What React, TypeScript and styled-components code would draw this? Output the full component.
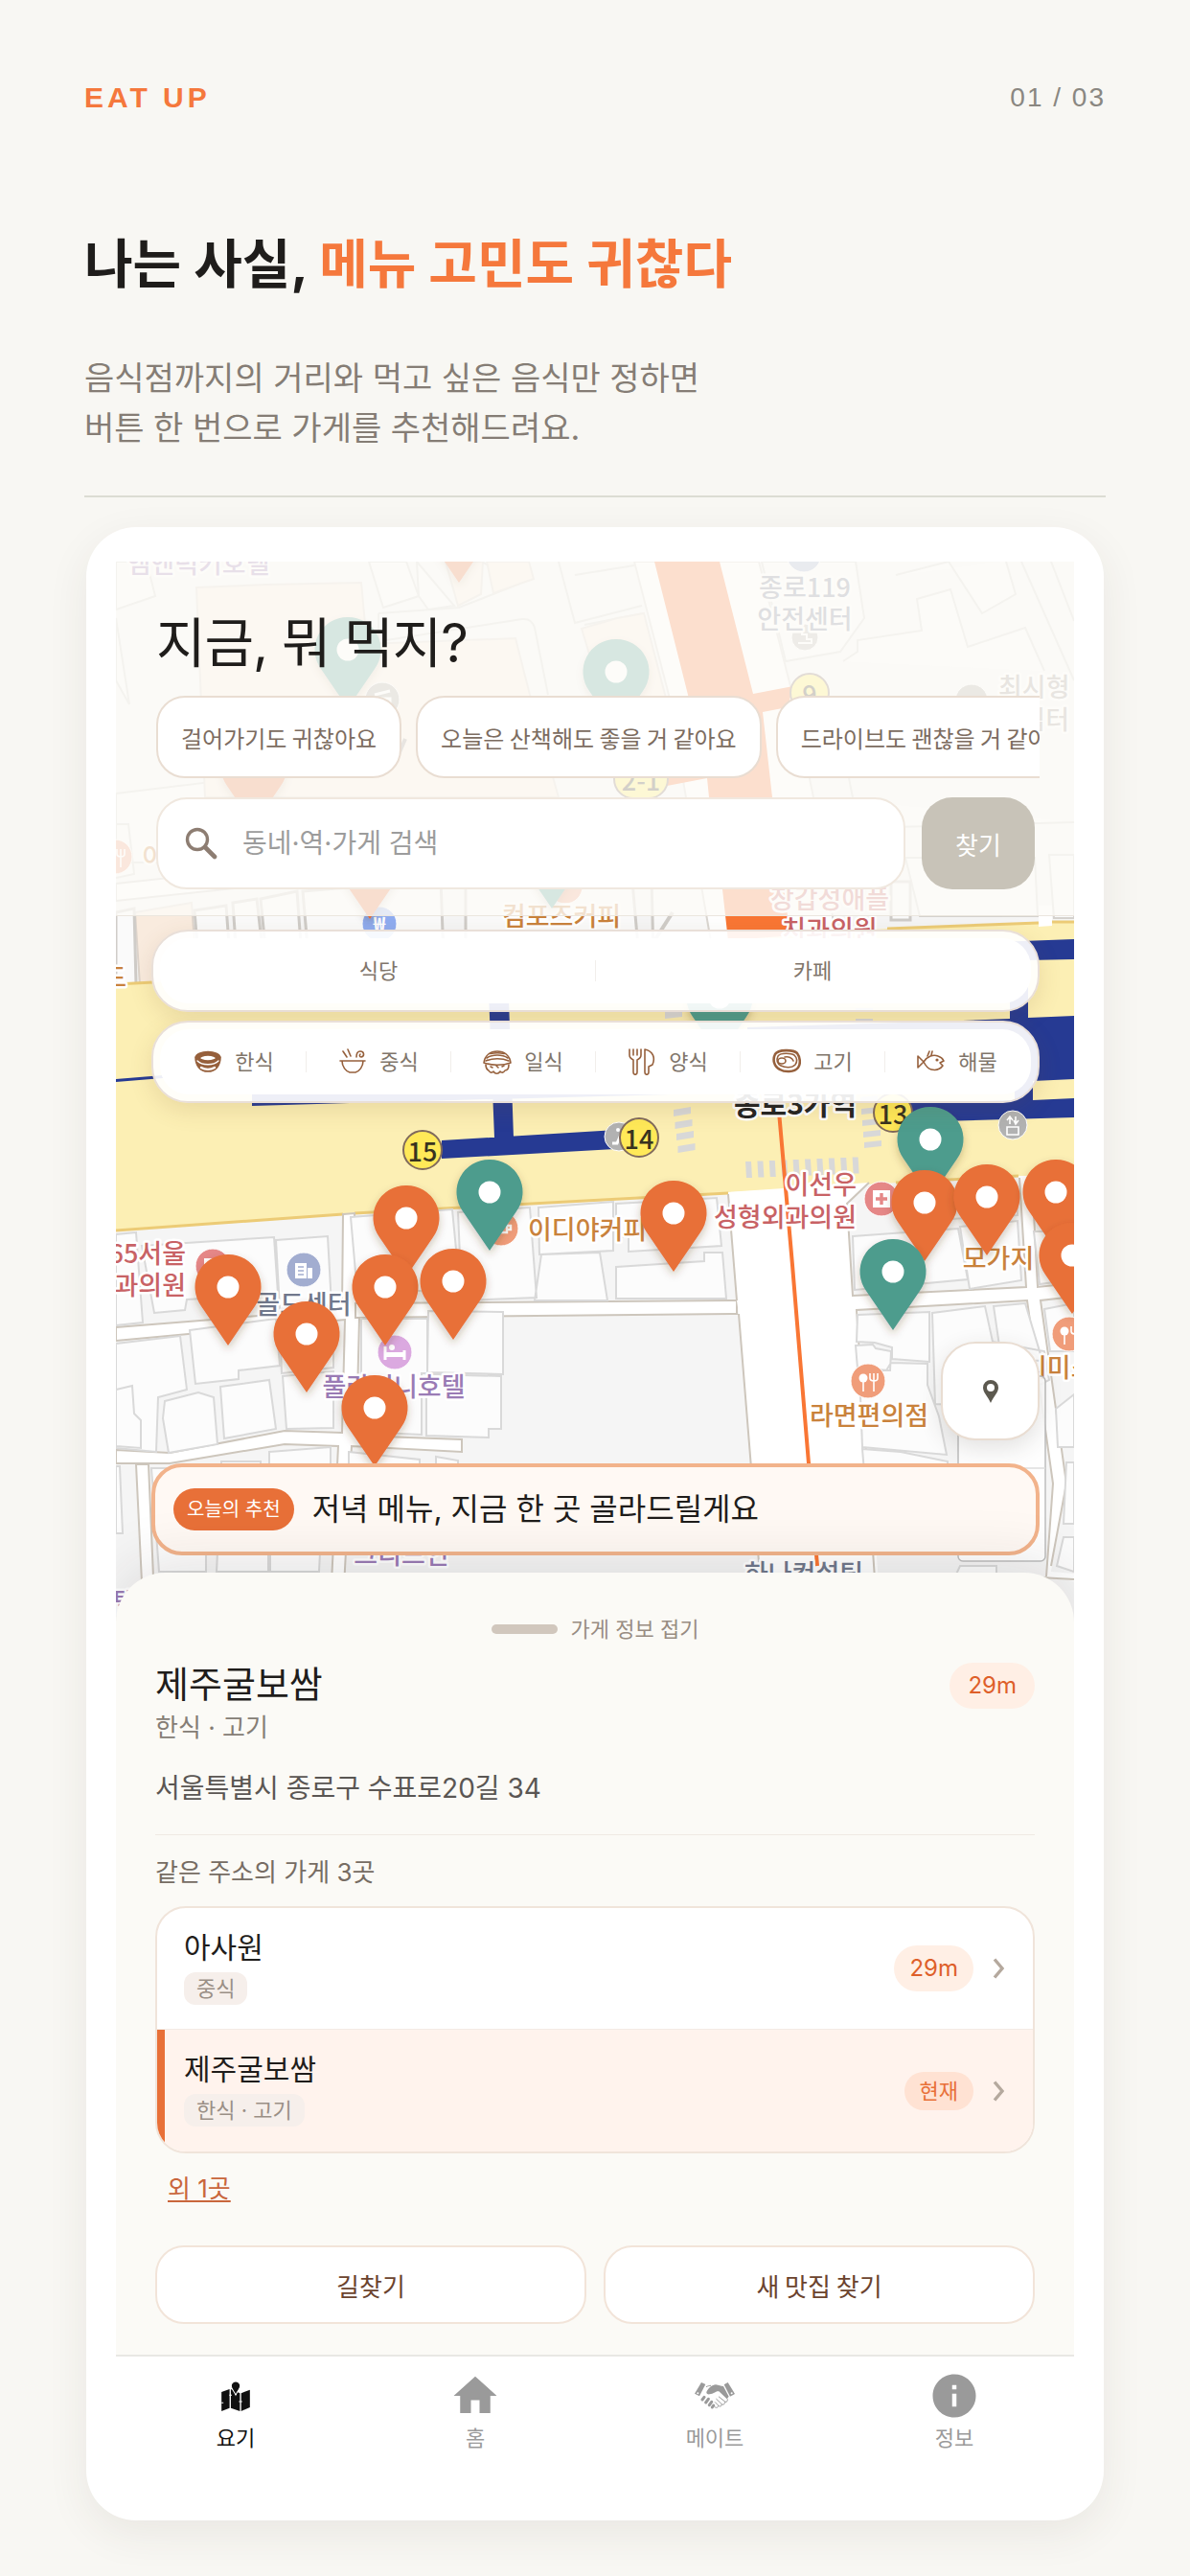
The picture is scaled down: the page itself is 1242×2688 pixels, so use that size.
import React from "react";
import styled, { createGlobalStyle, css } from "styled-components";
import { MdHome, MdInfo } from "react-icons/md";

const kr = `"Noto Sans CJK KR", sans-serif`;
const ui = `Inter, "Noto Sans CJK KR", sans-serif`;

const color = {
  paper: "#f8f7f3",
  ink: "#1f1d1b",
  orange: "#e87038",
  brand: "#f5783c",
  muted: "#857d75",
  line: "#e9ddd2",
};

const GlobalStyle = createGlobalStyle`
  * { box-sizing: border-box; }
  body { margin: 0; background: ${color.paper}; font-family: ${kr}; color: ${color.ink}; }
  button, input { font: inherit; color: inherit; margin: 0; }
  button { cursor: pointer; padding: 0; border: 0; background: none; }
  h1, h2, h3, p, ul { margin: 0; padding: 0; font-weight: 400; }
  ul { list-style: none; }
`;

/* ---------- Page ---------- */

const Page = styled.main`
  padding: 84px 88px 48px;
`;

const TopBar = styled.header`
  display: flex;
  align-items: center;
  justify-content: space-between;
  font-family: "Liberation Sans", Arial, sans-serif;
  line-height: 36px;
`;

const Brand = styled.span`
  font-size: 30px;
  font-weight: 700;
  letter-spacing: 4px;
  color: ${color.brand};
`;

const PageNumber = styled.span`
  font-size: 28px;
  letter-spacing: 2px;
  color: #8a8781;
`;

const Headline = styled.h1`
  margin-top: 119px;
  font-family: ${ui};
  font-size: 55px;
  line-height: 72px;
  font-weight: 700;

  em {
    font-style: normal;
    color: ${color.brand};
  }
`;

const Lead = styled.p`
  margin-top: 58px;
  padding-bottom: 44px;
  border-bottom: 2px solid #dcdcd3;
  font-family: ${ui};
  font-size: 34px;
  line-height: 52px;
  color: ${color.muted};
`;

const Card = styled.section`
  margin: 31px 2px 0;
  padding: 36px 31px;
  border-radius: 52px;
  background: #fff;
  box-shadow: 0 14px 44px rgba(60, 50, 40, 0.08);
`;

/* ---------- App screen ---------- */

const Screen = styled.div`
  position: relative;
  overflow: hidden;
  font-family: ${ui};
`;

const MapLayer = styled.svg`
  position: absolute;
  top: 0;
  left: 0;
  width: 100%;
  height: 1106px;
`;

const SearchPanel = styled.div`
  position: relative;
  padding: 53px 36px 27px 42px;
  border-bottom: 1px solid #ebe6de;
  background: rgba(253, 251, 248, 0.79);
`;

const ScreenTitle = styled.h2`
  font-size: 56px;
  line-height: 64px;
  letter-spacing: -1px;
`;

const ChipRow = styled.div`
  display: flex;
  gap: 15px;
  margin-top: 23px;
  overflow: hidden;
`;

const outlined = css`
  border: 2px solid ${color.line};
  background: #fff;
`;

const Chip = styled.button`
  ${outlined}
  flex: none;
  height: 86px;
  padding: 0 24px;
  border-radius: 30px;
  font-family: ${kr};
  font-size: 24px;
  color: #7c6c60;
`;

const SearchRow = styled.form`
  display: flex;
  gap: 17px;
  margin-top: 20px;
  padding-right: 5px;
`;

const SearchField = styled.label`
  ${outlined}
  flex: 1;
  display: flex;
  align-items: center;
  gap: 24px;
  height: 96px;
  padding: 0 28px;
  border-color: #f0e8df;
  border-radius: 32px;
`;

const SearchInput = styled.input`
  flex: 1;
  min-width: 0;
  border: 0;
  outline: 0;
  background: none;
  font-size: 28px;

  &::placeholder {
    color: #9c9c9c;
    opacity: 1;
  }
`;

const FindButton = styled.button`
  width: 118px;
  border-radius: 32px;
  background: #c8c3b8;
  font-family: ${kr};
  font-size: 26px;
  color: #fff;
`;

const FilterStack = styled.div`
  position: relative;
  display: grid;
  gap: 9px;
  margin: 14px 36px 0 37px;
`;

const FilterBar = styled.div`
  height: 86px;
  padding: 7px;
  border: 2px solid #e9dfd8;
  border-radius: 38px;
  background: rgba(255, 255, 255, 0.92);
  box-shadow: 0 8px 24px rgba(120, 84, 40, 0.14);
`;

const FilterTrack = styled.div`
  display: flex;
  align-items: center;
  height: 100%;
  padding: 0 2px;
  border-radius: 30px;
  background: #fff;
`;

const FilterButton = styled.button`
  flex: 1;
  display: flex;
  align-items: center;
  justify-content: center;
  gap: 13px;
  height: 22px;
  font-size: 22px;
  line-height: 22px;
  color: #80756a;

  & + & {
    border-left: 1px solid #f1eeeb;
  }
`;

const MapTools = styled.div`
  position: relative;
  display: flex;
  justify-content: flex-end;
  margin: 249px 36px 0;
`;

const LocateButton = styled.button`
  ${outlined}
  display: grid;
  place-items: center;
  width: 103px;
  height: 103px;
  border-radius: 36px;
  box-shadow: 0 8px 24px rgba(60, 50, 40, 0.14);
`;

const Recommend = styled.button`
  position: relative;
  display: flex;
  align-items: center;
  gap: 19px;
  width: calc(100% - 73px);
  height: 96px;
  margin: 24px 36px 0 37px;
  padding: 0 19px;
  border: 4px solid #f2b38b;
  border-radius: 32px;
  background: #fff9f4;
  text-align: left;
`;

const RecommendTag = styled.span`
  height: 44px;
  padding: 0 14px;
  border-radius: 22px;
  background: ${color.orange};
  font-size: 20px;
  line-height: 44px;
  color: #fff;
`;

const RecommendText = styled.span`
  font-size: 32px;
  line-height: 44px;
`;

/* ---------- Bottom sheet ---------- */

const Sheet = styled.section`
  position: relative;
  margin-top: 18px;
  padding: 44px 41px 32px;
  border-radius: 52px 52px 0 0;
  background: #fbfaf6;
  box-shadow: 0 -8px 64px rgba(40, 30, 30, 0.12);
`;

const Handle = styled.button`
  display: flex;
  align-items: center;
  justify-content: center;
  gap: 14px;
  width: 100%;
  font-size: 22px;
  line-height: 30px;
  color: #988c82;

  &::before {
    content: "";
    width: 69px;
    height: 10px;
    border-radius: 5px;
    background: #d1c7bd;
  }
`;

const PlaceHead = styled.div`
  display: flex;
  align-items: flex-start;
  justify-content: space-between;
  margin-top: 20px;
`;

const PlaceName = styled.h2`
  font-size: 38px;
  line-height: 44px;
`;

const Meta = styled.p<{ $top: number; $tone?: string; $size?: number }>`
  margin-top: ${(p) => p.$top}px;
  font-size: ${(p) => p.$size ?? 26}px;
  line-height: ${(p) => (p.$size ? 36 : 32)}px;
  color: ${(p) => p.$tone ?? color.muted};
`;

const Pill = styled.span<{ $current?: boolean; $wide?: boolean }>`
  padding: 0 ${(p) => (p.$wide ? 19 : 16)}px;
  border-radius: 24px;
  background: ${(p) => (p.$current ? "#ffe2d3" : "#ffefe5")};
  font-size: ${(p) => (p.$current ? 22 : 24)}px;
  line-height: ${(p) => (p.$current ? 40 : 48)}px;
  color: ${(p) => (p.$current ? color.orange : "#de5f2a")};
`;

const Divider = styled.hr`
  height: 1px;
  margin: 30px 0 0;
  border: 0;
  background: #efe9e3;
`;

const PlaceList = styled.ul`
  margin-top: 19px;
  overflow: hidden;
  border: 2px solid #f0e4da;
  border-radius: 32px;
  background: #fff;
`;

const PlaceRow = styled.button<{ $active?: boolean }>`
  display: flex;
  align-items: center;
  gap: 18px;
  width: 100%;
  height: 127px;
  padding: 0 28px;
  text-align: left;
  ${(p) =>
    p.$active
      ? css`
          background: #fff3ed;
          box-shadow: inset 8px 0 0 ${color.orange};
        `
      : css`
          border-bottom: 1px solid #f3ebe5;
        `}
`;

const RowText = styled.span`
  flex: 1;
  display: grid;
  justify-items: start;
  gap: 6px;
  padding-bottom: 5px;
`;

const RowName = styled.span`
  font-size: 30px;
  line-height: 40px;
`;

const Tag = styled.span`
  padding: 0 13px;
  border-radius: 12px;
  background: #f6efeb;
  font-size: 22px;
  line-height: 34px;
  color: #9a8f86;
`;

const MoreLink = styled.a`
  display: block;
  width: fit-content;
  margin: 21px 0 0 13px;
  font-size: 26px;
  line-height: 32px;
  color: #c9663c;
  text-decoration: underline;
  text-underline-offset: 3px;
`;

const Actions = styled.div`
  display: grid;
  grid-template-columns: 1fr 1fr;
  gap: 18px;
  margin-top: 43px;
`;

const ActionButton = styled.button`
  ${outlined}
  height: 82px;
  border-color: #f2e4d9;
  border-radius: 30px;
  font-family: ${kr};
  font-size: 26px;
  color: #6b432e;
`;

const TabBar = styled.nav`
  position: relative;
  display: grid;
  grid-template-columns: repeat(4, 1fr);
  border-top: 2px solid #e9e8e4;
  background: #fff;
`;

const Tab = styled.button<{ $active?: boolean }>`
  display: grid;
  grid-template-rows: 54px 28px;
  gap: 3px;
  place-items: center;
  padding: 14px 0 36px;
  font-size: 22px;
  line-height: 28px;
  color: ${(p) => (p.$active ? "#111" : "#9a9a9a")};
`;

/* ---------- Icons ---------- */

const SearchIcon = () => (
  <svg width="34" height="34" viewBox="0 0 34 34" fill="none" stroke="#8d7d72" strokeLinecap="round" aria-hidden>
    <circle cx="13" cy="13" r="10.5" strokeWidth="3.4" />
    <path d="M21 21l10 10" strokeWidth="4.6" />
  </svg>
);

const Chevron = () => (
  <svg width="16" height="24" viewBox="0 0 16 24" fill="none" stroke="#b5a99e" strokeWidth="3.4" aria-hidden>
    <path d="M4 2.500l8 9.500l-8 9.500" />
  </svg>
);

const LocateIcon = () => (
  <svg width="16" height="24" viewBox="0 0 16 24" aria-hidden>
    <path fillRule="evenodd" fill="#5c594f" d="M8 0a8 8 0 0 0-8 8c0 5 5 9 8 16c3-7 8-11 8-16a8 8 0 0 0-8-8zm0 4a4 4 0 1 1 0 8a4 4 0 0 1 0-8z" />
  </svg>
);

const MapIcon = () => (
  <svg width="30" height="31" viewBox="0 0 88 92" fill="currentColor" aria-hidden>
    <path d="M0 33L25 24V82L0 92zM29 24L57 36V92L29 82zM61 36L88 26V80L61 92z" />
    <path d="M44 0a14 14 0 0 1 14 14c0 9-9 15-14 28c-5-13-14-19-14-28a14 14 0 0 1 14-14z" stroke="#fff" strokeWidth="3" />
    <path d="M0 66h6M24 42h8M54 62h10" stroke="#fff" strokeWidth="3" />
  </svg>
);

const HandshakeIcon = () => (
  <svg width="42" height="28" viewBox="0 0 126 84" fill="currentColor" aria-hidden>
    <path d="M21 0L34 6L15 43L0 35z" />
    <path d="M104 0L92 7L111 44L126 36z" />
    <circle cx="10" cy="34" r="3" fill="#fff" />
    <circle cx="116" cy="34" r="3" fill="#fff" />
    <path d="M37 30C44 16 55 8 66 7C76 8 82 12 90 12L107 44L101 52L76 28C66 26 60 36 47 37C41 38 36 35 37 30z" />
    <path d="M36 14C42 11 46 10 51 10" fill="none" stroke="currentColor" strokeWidth="3" />
    <g stroke="currentColor" strokeWidth="9" strokeLinecap="round">
      <path d="M24 54l6-8M35 63l8-11M46 71l7-10M55 78l4-6" />
    </g>
    <g fill="none" stroke="currentColor" strokeWidth="3" strokeLinecap="round">
      <path d="M76 45l20 16c5 1 8-3 7-8M68 52l18 17c5 2 9-2 9-7M64 62l12 12c4 3 9 0 9-5M62 76c5 5 11 4 12-2" />
    </g>
  </svg>
);

const FoodSvg = styled.svg`
  width: 30px;
  height: 28px;
  fill: none;
  stroke: #96603c;
  stroke-width: 1.600;
  stroke-linecap: round;
  stroke-linejoin: round;
`;

const foods = [
  {
    label: "한식",
    art: (
      <>
        <path d="M2 9c0 9 5 15 13 15s13-6 13-15z" fill="#96603c" />
        <ellipse cx="15" cy="9" rx="12.500" ry="5.500" fill="#96603c" />
        <ellipse cx="15" cy="10" rx="8.500" ry="3" fill="#fff" />
        <path d="M4 13c5 5 17 5 22 0" stroke="#fff" strokeWidth="1.400" />
        <path d="M8 20c4 2.500 10 2.500 14 0" stroke="#fff" strokeWidth="2.400" />
      </>
    ),
  },
  {
    label: "중식",
    art: (
      <>
        <path d="M2 13h26M4 13c0 6 4 11 8 12h6c4-1 8-6 8-12M5 3l4 6M10 1l3 7" />
        <path d="M19 9c0-5 2-6 4-6c4 0 5 5 1 6c-2 0-2-2-1-3" />
      </>
    ),
  },
  {
    label: "일식",
    art: (
      <>
        <path d="M1 15C2 7 8 3 15 3s13 4 14 12c-8 3-20 3-28 0z" />
        <path d="M4 10c6-4 16-4 22 0M3 13c7-3 17-3 24 0M8 5.500c5-1 9-1 14 0" />
        <path d="M3 17c0 3 1 5 3 6c1 2 3 3 5 1c2 3 5 3 7 0c2 2 4 1 5-1c3 0 4-3 4-6M8 19l2 1M14 18l2 2M20 19l2-1" />
      </>
    ),
  },
  {
    label: "양식",
    art: (
      <>
        <path d="M2 1v6c0 3 2 4 4 5v13c0 3 4 3 4 0V12c2-1 4-2 4-5V1M6 1v6M10 1v6" />
        <path d="M18 1v24c0 3 4 3 4 0v-6l4-2c3-7 1-14-8-16z" />
      </>
    ),
  },
  {
    label: "고기",
    art: (
      <>
        <path d="M3 6C6 1 22 1 26 5c3 4 4 11 1 15c-4 5-14 5-19 2C2 19 0 12 3 6z" strokeWidth="2.600" />
        <path d="M6 8c3-4 14-3 17-1c3 3 3 7 1 10c-4 4-11 3-15 1c-4-2-5-6-3-10z" />
        <ellipse cx="10" cy="13" rx="4" ry="3" />
        <path d="M13 9c4-1 8 1 9 4" />
      </>
    ),
  },
  {
    label: "해물",
    art: (
      <>
        <path d="M1 8l6 6l-6 6zM7 14c4-6 10-8 15-6c3 1 5 3 6 5l-4 2l3 3c-3 4-8 5-12 4c-4-1-6-4-8-8z" />
        <path d="M11 8l2-5M15 7l1-4" />
        <circle cx="21" cy="12" r="0.800" />
      </>
    ),
  },
];

/* ---------- Map drawing ---------- */

type Point = [number, number];

const Pin = ({ at: [x, y], teal }: { at: Point; teal?: boolean }) => (
  <g transform={`translate(${x} ${y})`} filter="url(#pinShadow)">
    <path d="M0-34A34 34 0 0 1 28 20L0 61L-28 20A34 34 0 0 1 0-34z" fill={teal ? "#4e9c8d" : color.orange} />
    <circle r="11.500" fill="#fff" />
  </g>
);

const tealBack: Point[] = [[363, 678], [643, 701], [576, 887], [751, 1041], [971, 1189]];
const orangePins: Point[] = [
  [479, 547], [265, 800], [386, 898], [424, 1271], [238, 1343], [402, 1343], [473, 1337],
  [320, 1392], [391, 1469], [703, 1266], [965, 1255], [1030, 1249], [1102, 1244], [1119, 1310],
];
const tealFront: Point[] = [[511, 1244], [932, 1327]];

const tone = { red: "#c86265", brown: "#c9823c", purple: "#9a7bb5", slate: "#70788c", dark: "#232323", gray: "#9a938c" };

const Label = styled.text<{ $station?: boolean }>`
  font-family: ${kr};
  font-size: ${(p) => (p.$station ? 30 : 27)}px;
  font-weight: ${(p) => (p.$station ? 700 : 500)};
  paint-order: stroke;
  stroke: #fff;
  stroke-width: 5px;
  stroke-linejoin: round;
`;

const labels: { x: number; y: number; text: string; fill: string; anchor?: "start" | "end" | "middle" }[] = [
  { x: 207, y: 598, text: "앰앤럭키호텔", fill: tone.purple },
  { x: 840, y: 623, text: "종로119", fill: tone.slate },
  { x: 840, y: 656, text: "안전센터", fill: tone.slate },
  { x: 1042, y: 727, text: "최시형 생", fill: tone.gray, anchor: "start" },
  { x: 1116, y: 761, text: "집터", fill: tone.gray, anchor: "end" },
  { x: 148, y: 904, text: "이", fill: tone.brown, anchor: "start" },
  { x: 132, y: 1030, text: "드", fill: tone.brown, anchor: "end" },
  { x: 586, y: 966, text: "컴포즈커피", fill: tone.brown },
  { x: 866, y: 948, text: "장갑성애플", fill: tone.red },
  { x: 866, y: 980, text: "치과의원", fill: tone.red },
  { x: 194, y: 1318, text: "65서울", fill: tone.red, anchor: "end" },
  { x: 194, y: 1351, text: "과의원", fill: tone.red, anchor: "end" },
  { x: 317, y: 1371, text: "골드센터", fill: tone.slate },
  { x: 411, y: 1457, text: "풀라지니호텔", fill: tone.purple },
  { x: 551, y: 1293, text: "이디야커피", fill: tone.brown, anchor: "start" },
  { x: 894, y: 1246, text: "이선우", fill: tone.red, anchor: "end" },
  { x: 894, y: 1280, text: "성형외과의원", fill: tone.red, anchor: "end" },
  { x: 1042, y: 1323, text: "모가지", fill: tone.brown },
  { x: 907, y: 1487, text: "라면편의점", fill: tone.brown },
  { x: 1068, y: 1437, text: "시미소", fill: tone.brown, anchor: "start" },
  { x: 839, y: 1652, text: "하나컨설팅", fill: tone.slate },
  { x: 419, y: 1632, text: "그리드인", fill: tone.purple },
  { x: 118, y: 1682, text: "호텔", fill: tone.purple, anchor: "middle" },
];

const Poi = ({ at: [x, y], fill, r = 18, children }: { at: Point; fill: string; r?: number; children?: React.ReactNode }) => (
  <g transform={`translate(${x} ${y})`}>
    <circle r={r} fill={fill} stroke="#fff" strokeWidth="1" />
    {children}
  </g>
);

const Cutlery = () => (
  <g stroke="#fff" strokeWidth="1.600" fill="none">
    <circle cx="-5" cy="-3" r="4.500" fill="#fff" stroke="none" />
    <path d="M-5 0V11M6-8V11M2-8v5c0 4 8 4 8 0v-5" />
  </g>
);

const ExitMark = ({ at: [x, y], text, rx = 20 }: { at: Point; text: string; rx?: number }) => (
  <g>
    <rect x={x - rx} y={y - 20} width={rx * 2} height="40" rx="20" fill="#ffe958" stroke="#806a5c" strokeWidth="2" />
    <text x={x} y={y + 12} textAnchor="middle" fontFamily={kr} fontSize="27" fontWeight="500" fill="#38331f">{text}</text>
  </g>
);

const CityMap = () => (
  <MapLayer viewBox="121 586 1000 1106" preserveAspectRatio="xMidYMin slice" role="img" aria-label="종로3가역 주변 지도">
    <defs>
      <filter id="pinShadow" x="-30%" y="-20%" width="160%" height="150%">
        <feDropShadow dx="0" dy="4" stdDeviation="4" floodColor="#5a3c28" floodOpacity="0.28" />
      </filter>
    </defs>
    <rect x="121" y="586" width="1000" height="1106" fill="#f5f5f5" />

    {/* northern blocks */}
    <g fill="#fafafa" stroke="#d5d2ce" strokeWidth="2">
      <path d="M121 636L162 622L153 586H121zM121 710L135 735L121 645zM400 634L437 622L424 586H385zM437 622L447 636L474 632L435 586z" />
      <path d="M395 640L479 634L540 610L503 586M395 705V640M403 668L545 646Q555 645 558 655L572 725" fill="none" />
      <path d="M121 828L228 815L232 900H121zM121 860H134L140 912L121 916M228 815L330 800" />
      <path d="M583 586L600 650L670 632M600 600L662 590M610 652L672 640" fill="none" />
      <path d="M795 586L820 690L877 680L902 645L893 586zM880 690L895 680V668L962 658L957 625L992 615L1010 675L1070 655L1090 700M935 600L990 586L1025 640L1060 620L1050 586M1066 586L1121 710M1097 586L1121 648" />
      <path d="M849 832L860 865L1121 858M890 832L886 812M945 895H1080L1083 956H960zM1095 892H1121V958H1100z" />
    </g>
    <g fill="#f9ebde" stroke="#ddd4cc" strokeWidth="2">
      <path d="M205 613L278 610L377 608L383 672L538 666L553 725L583 832H214z" />
      <path d="M465 586H504L502 620L478 632zM508 586H552L557 604L515 619z" />
      <path d="M607 656L644 645L672 640L698 740L690 770L640 765z" />
      <path d="M141 952L200 942L206 1027L146 1028z" />
    </g>
    <path d="M121 922L380 894L560 885L740 878V900L560 906L330 918L121 940z" fill="#fff" stroke="#cfccc8" strokeWidth="2" />
    <g fill="#fafafa" stroke="#cfccc8" strokeWidth="3">
      <path d="M121 952L140 948L142 1027H121zM203 950L236 945L240 1000H207zM243 942L268 938L275 1000H247zM272 938L310 930L315 1000H278zM316 930L460 918L463 1000H322zM486 920H660L667 1000H486zM680 915H752L756 1000H682zM930 920H950V960H930z" />
    </g>
    <path d="M662 586H792L826 720L849 832L876 1000H745L716 832L698 725z" fill="#fff" stroke="#dad6d1" strokeWidth="2" />
    <path d="M702 952L668 1005" stroke="#cfccc8" strokeWidth="4" />
    <path d="M683 586H751L786 724L828 716L822 738L796 743L806 832L822 956L838 1072H770L754 928L740 832L738 812L696 820L698 808L736 800L718 725z" fill="#f97634" />

    {/* main avenue */}
    <path d="M121 1027L160 1025L926 969L1121 961V1226L1063 1227L760 1244L358 1267L121 1284z" fill="#fcefb4" />
    <path d="M121 1027L160 1025M926 969L1084 963M1096 962H1121M121 1284L358 1267M370 1266L760 1245M935 1234L1063 1227" fill="none" stroke="#eccb76" strokeWidth="3" />
    <path d="M1084 945H1098V966L1084 967z" fill="#fff" />
    <g fill="#d8d8d8">
      {[1156, 1169, 1181, 1194].map((y, i) => (
        <path key={y} d={`M${703 + i * 1.5} ${y + 2}l18-3v7l-18 3z`} />
      ))}
      {[1143, 1155, 1167, 1179, 1190].map((y, i) => (
        <path key={y} d={`M${898 + i} ${y + 2}l18-2v6l-18 2z`} />
      ))}
      {Array.from({ length: 10 }, (_, i) => (
        <path key={i} d={`M${778 + i * 12.4} ${1212 - i * 0.5}h6l1 17h-6z`} />
      ))}
      <path d="M694 1056l18-2v7l-18 2zM893 1063h18v6h-18zM893 1052h18v4h-18z" />
    </g>

    {/* underground passages */}
    <g fill="#263a93">
      <path d="M121 1126L170 1122V1125L121 1129zM263 1138L700 1130V1142L365 1151L263 1154z" />
      <path d="M508 985H529L536 1187H516zM461 1190L660 1178V1198L461 1209z" />
      <path d="M1040 983L1121 980V1001L1073 1002V1062L1121 1060V1126L1078 1128V1148L1121 1146V1166L945 1171V1151L1059 1148V1128L780 1110V1072L1005 1065L1054 1063V1002H1040z" />
    </g>

    {/* southern streets */}
    <path d="M358 1267L370 1266L375 1375L372 1498L482 1502V1515L367 1509L357 1692H344L353 1509L297 1507L177 1527H121V1513L177 1516L297 1493L357 1495L360 1377L121 1399V1385L357 1366z" fill="#fff" stroke="#cdc6bc" strokeWidth="2" />
    <path d="M371 1360L769 1357V1371L371 1375z" fill="#fff" stroke="#cdc6bc" strokeWidth="2" />
    <path d="M142 1528H155L162 1692H150z" fill="#fff" stroke="#cdc6bc" strokeWidth="2" />
    <path d="M760 1244L907 1234L884 1256L890 1352L1071 1343L1063 1227H1077L1083 1343L1121 1339V1353L1086 1357L1113 1548L1097 1640L1121 1642V1650L1092 1645L1099 1548L1072 1357L896 1367L920 1692H797L771 1371L769 1357z" fill="#fff" />
    <path d="M760 1246L769 1357M771 1371L797 1692M907 1234L884 1256L890 1352L1071 1343L1064 1229M1077 1229L1083 1343L1121 1339M1121 1353L1086 1357L1113 1548L1097 1634M1092 1645L1099 1548L1072 1357L894 1367L916 1692M1085 1646L1121 1648" fill="none" stroke="#cdc6bc" strokeWidth="2" />

    {/* southern buildings */}
    <g fill="#fcfcfc" stroke="#d9d9d9" strokeWidth="2">
      <path d="M121 1288L142 1286L149 1380L121 1383zM148 1300L286 1291L290 1350L195 1356L193 1367L161 1370zM288 1294L342 1290L346 1362L292 1366z" />
      <path d="M366 1270L472 1262L480 1345L373 1350zM478 1265L553 1260L560 1354L482 1357zM562 1260L640 1254V1305L563 1309zM565 1309L626 1307L634 1357H558z" />
      <path d="M643 1256L748 1250L753 1300L656 1306V1290L643 1292zM643 1322L735 1316V1307H754L758 1355H643z" />
      <path d="M121 1402L188 1394L195 1450L165 1458L163 1515L121 1511zM198 1388L288 1376L292 1425L249 1430V1439L204 1444zM230 1447L281 1440L288 1491L234 1501zM172 1462L207 1453L223 1458L227 1507L176 1516L170 1480z" />
      <path d="M292 1378L348 1374V1427L294 1433zM295 1436L348 1431V1490L299 1491zM377 1376H446V1433H440V1497L377 1494zM447 1368L525 1369V1434L446 1432zM445 1434L523 1436V1491H510V1500L445 1498z" />
      <path d="M121 1450L138 1446L140 1475L147 1482V1511L121 1509zM281 1515L345 1510V1560L281 1565zM231 1525H272V1560H231zM121 1530H125L128 1600H121zM158 1532H215V1640H166zM228 1600H280V1640H226zM282 1600H335L333 1640H282zM364 1515L438 1523V1560H364zM455 1520L478 1524V1560H455z" />
      <path d="M890 1290L1000 1282L1010 1335L892 1346zM1002 1280L1062 1274L1066 1336L1012 1345zM1079 1285H1121V1335L1085 1340zM941 1244L1060 1236L1062 1268L942 1275z" />
      <path d="M895 1372L970 1369V1421L931 1418V1406L913 1401L894 1400zM893 1404L911 1403L914 1407L930 1410L929 1430L895 1428zM930 1422L968 1423V1445L980 1478L988 1518L900 1510L897 1430H925zM973 1370L1028 1363L1036 1400L1090 1410L1095 1440L1040 1468L976 1465zM1037 1363L1070 1360L1088 1420L1045 1418z" />
      <path d="M1090 1366L1121 1360V1410H1096zM1102 1470L1121 1455V1510H1104zM1113 1526H1121V1590H1110zM900 1512L940 1515L989 1525V1560H904zM1110 1604H1121V1640L1103 1634zM1002 1634H1040V1660H990z" />
    </g>

    <path d="M813 1160L827 1320L844 1527L853 1634" fill="none" stroke="#f97634" strokeWidth="4" />

    {/* places */}
    <Poi at={[839, 579]} fill="#a2add0" />
    <Poi at={[840, 665]} fill="#b8b4b0" r={14}>
      <path d="M-7 6H7V2H2V-3H-3V-8H-7" fill="none" stroke="#fff" strokeWidth="2" />
    </Poi>
    <Poi at={[1014, 731]} fill="#aaa49e" r={17} />
    <Poi at={[399, 730]} fill="#aaa49e">
      <path d="M-8-5L8-9M-8-1H8V8H-8z" fill="none" stroke="#fff" strokeWidth="3" />
    </Poi>
    <path d="M423 771L414 792" stroke="#9a938c" strokeWidth="4" />
    <Poi at={[120, 894]} fill="#f09d7a"><Cutlery /></Poi>
    <Poi at={[590, 925]} fill="#f09d7a" />
    <Poi at={[396, 964]} fill="#8facf0">
      <text y="8" textAnchor="middle" fontFamily={kr} fontWeight="700" fontSize="21" fill="#fff">₩</text>
    </Poi>
    <Poi at={[222, 1321]} fill="#e58787">
      <rect x="-9" y="-8" width="16" height="16" fill="#fff" />
    </Poi>
    <Poi at={[317, 1325]} fill="#a2add0">
      <path d="M-9 9V-7H3V9zM4 9V-2H9V9z" fill="#fff" />
      <path d="M-6-3H0M-6 1H0M-6 5H0" stroke="#a2add0" strokeWidth="1.600" />
    </Poi>
    <Poi at={[412, 1411]} fill="#dba9e0">
      <path d="M-10-6V8M10-2V8M-10 3H10" stroke="#fff" strokeWidth="3" />
      <circle cx="-3" cy="-5" r="3" fill="#fff" />
      <rect x="-9" y="0" width="18" height="5" fill="#fff" />
    </Poi>
    <Poi at={[523, 1282]} fill="#f09d7a">
      <path d="M-4-5H6V4H-4zM6-3H10V1H6" fill="none" stroke="#fff" strokeWidth="2.400" />
    </Poi>
    <Poi at={[920, 1251]} fill="#e58787">
      <rect x="-9" y="-9" width="18" height="18" fill="#fff" />
      <path d="M-6 0H6M0-6V6" stroke="#e58787" strokeWidth="3.400" />
    </Poi>
    <Poi at={[646, 1186]} fill="#b2b2b2" r={15}>
      <path d="M-7 7H-2L2-2H5" fill="none" stroke="#fff" strokeWidth="3" />
      <circle cx="-1" cy="-7" r="2" fill="#fff" />
    </Poi>
    <Poi at={[1057, 1174]} fill="#b2b2b2" r={15}>
      <path d="M-6 2H6V10H-6zM-3-1V-8M-6-5L-3-9L0-5M3-9V-2M1-5L3-1L6-5" fill="none" stroke="#fff" strokeWidth="1.600" />
    </Poi>
    <Poi at={[906, 1441]} fill="#f09d7a"><Cutlery /></Poi>
    <Poi at={[1116, 1392]} fill="#f09d7a"><Cutlery /></Poi>

    {labels.map((l) => (
      <Label key={l.text} x={l.x} y={l.y} fill={l.fill} textAnchor={l.anchor ?? "middle"}>
        {l.text}
      </Label>
    ))}
    <Label $station x="830" y="1163" fill={tone.dark} textAnchor="middle">종로3가역</Label>

    <ExitMark at={[845, 723]} text="9" />
    <ExitMark at={[669, 813]} text="2-1" rx={28} />
    <ExitMark at={[441, 1200]} text="15" />
    <ExitMark at={[667, 1187]} text="14" />
    <ExitMark at={[932, 1161]} text="13" />

    {tealBack.map((p) => <Pin key={p.join()} at={p} teal />)}
    {orangePins.map((p) => <Pin key={p.join()} at={p} />)}
    {tealFront.map((p) => <Pin key={p.join()} at={p} teal />)}

    <g>
      <rect x="1000" y="1436" width="91" height="193" rx="5" fill="#fff" fillOpacity="0.9" stroke="#bdbdbd" strokeWidth="1.500" />
      <path d="M1000 1532H1091" stroke="#dcdcdc" strokeWidth="1.500" />
    </g>
  </MapLayer>
);

/* ---------- App ---------- */

const chips = ["걸어가기도 귀찮아요", "오늘은 산책해도 좋을 거 같아요", "드라이브도 괜찮을 거 같아요"];

const tabs = [
  { label: "요기", icon: <MapIcon />, active: true },
  { label: "홈", icon: <MdHome size={54} /> },
  { label: "메이트", icon: <HandshakeIcon /> },
  { label: "정보", icon: <MdInfo size={54} /> },
];

export default function App() {
  return (
    <>
      <GlobalStyle />
      <Page>
        <TopBar>
          <Brand>EAT UP</Brand>
          <PageNumber>01 / 03</PageNumber>
        </TopBar>
        <Headline>
          나는 사실, <em>메뉴 고민도 귀찮다</em>
        </Headline>
        <Lead>
          음식점까지의 거리와 먹고 싶은 음식만 정하면
          <br />
          버튼 한 번으로 가게를 추천해드려요.
        </Lead>

        <Card>
          <Screen>
            <CityMap />
            <SearchPanel>
              <ScreenTitle>지금, 뭐 먹지?</ScreenTitle>
              <ChipRow>
                {chips.map((c) => (
                  <Chip key={c} type="button">{c}</Chip>
                ))}
              </ChipRow>
              <SearchRow onSubmit={(e) => e.preventDefault()}>
                <SearchField>
                  <SearchIcon />
                  <SearchInput type="text" placeholder="동네·역·가게 검색" aria-label="동네·역·가게 검색" />
                </SearchField>
                <FindButton type="submit">찾기</FindButton>
              </SearchRow>
            </SearchPanel>

            <FilterStack>
              <FilterBar>
                <FilterTrack>
                  <FilterButton type="button">식당</FilterButton>
                  <FilterButton type="button">카페</FilterButton>
                </FilterTrack>
              </FilterBar>
              <FilterBar>
                <FilterTrack>
                  {foods.map((f) => (
                    <FilterButton key={f.label} type="button">
                      <FoodSvg viewBox="0 0 30 28" aria-hidden>{f.art}</FoodSvg>
                      {f.label}
                    </FilterButton>
                  ))}
                </FilterTrack>
              </FilterBar>
            </FilterStack>

            <MapTools>
              <LocateButton type="button" aria-label="내 위치">
                <LocateIcon />
              </LocateButton>
            </MapTools>

            <Recommend type="button">
              <RecommendTag>오늘의 추천</RecommendTag>
              <RecommendText>저녁 메뉴, 지금 한 곳 골라드릴게요</RecommendText>
            </Recommend>

            <Sheet>
              <Handle type="button">가게 정보 접기</Handle>
              <PlaceHead>
                <div>
                  <PlaceName>제주굴보쌈</PlaceName>
                  <Meta $top={8}>한식 · 고기</Meta>
                </div>
                <Pill $wide>29m</Pill>
              </PlaceHead>
              <Meta $top={29} $size={28} $tone="#5a5653">서울특별시 종로구 수표로20길 34</Meta>
              <Divider />
              <Meta $top={23} $tone="#766c63">같은 주소의 가게 3곳</Meta>

              <PlaceList>
                <li>
                  <PlaceRow type="button">
                    <RowText>
                      <RowName>아사원</RowName>
                      <Tag>중식</Tag>
                    </RowText>
                    <Pill>29m</Pill>
                    <Chevron />
                  </PlaceRow>
                </li>
                <li>
                  <PlaceRow type="button" $active>
                    <RowText>
                      <RowName>제주굴보쌈</RowName>
                      <Tag>한식 · 고기</Tag>
                    </RowText>
                    <Pill $current>현재</Pill>
                    <Chevron />
                  </PlaceRow>
                </li>
              </PlaceList>
              <MoreLink href="#more">외 1곳</MoreLink>

              <Actions>
                <ActionButton type="button">길찾기</ActionButton>
                <ActionButton type="button">새 맛집 찾기</ActionButton>
              </Actions>
            </Sheet>

            <TabBar>
              {tabs.map((t) => (
                <Tab key={t.label} type="button" $active={t.active}>
                  {t.icon}
                  {t.label}
                </Tab>
              ))}
            </TabBar>
          </Screen>
        </Card>
      </Page>
    </>
  );
}
